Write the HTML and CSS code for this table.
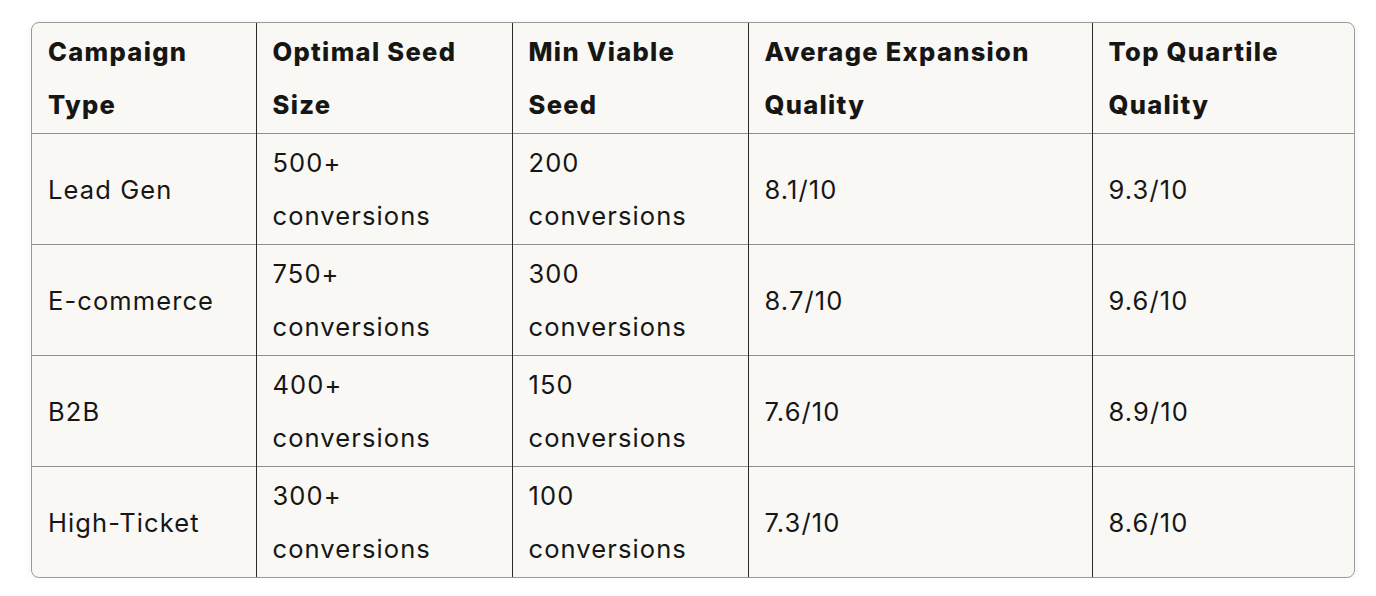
FILE: index.html
```html
<!DOCTYPE html>
<html>
<head>
<meta charset="utf-8">
<link rel="stylesheet" href="styles.css">
</head>
<body>
<div class="wrap">
  <table class="grid">
    <colgroup>
      <col class="c1"><col class="c2"><col class="c3"><col class="c4"><col class="c5">
    </colgroup>
    <thead>
      <tr>
        <th>Campaign Type</th>
        <th>Optimal Seed Size</th>
        <th>Min Viable Seed</th>
        <th>Average Expansion Quality</th>
        <th>Top Quartile Quality</th>
      </tr>
    </thead>
    <tbody>
      <tr><td>Lead Gen</td><td>500+ conversions</td><td>200 conversions</td><td>8.1/10</td><td>9.3/10</td></tr>
      <tr><td>E-commerce</td><td>750+ conversions</td><td>300 conversions</td><td>8.7/10</td><td>9.6/10</td></tr>
      <tr><td>B2B</td><td>400+ conversions</td><td>150 conversions</td><td>7.6/10</td><td>8.9/10</td></tr>
      <tr><td>High-Ticket</td><td>300+ conversions</td><td>100 conversions</td><td>7.3/10</td><td>8.6/10</td></tr>
    </tbody>
  </table>
</div>
</body>
</html>
```
FILE: styles.css
```css
html, body { margin: 0; padding: 0; background: #ffffff; }
body { padding: 22px 21px 0 31px; font-family: "Inter", "Liberation Sans", sans-serif; color: #161615; }
.wrap {
  width: 1324px;
  box-sizing: border-box;
  border: 1px solid #9a9a98;
  border-radius: 8px;
  overflow: hidden;
  background: #f9f8f5;
  box-shadow: 0 2px 10px rgba(0,0,0,0.06);
}
.grid { border-collapse: collapse; width: 100%; table-layout: fixed; font-size: 25.5px; line-height: 53px; letter-spacing: 1.1px; }
.c1 { width: 224px; }
.c2 { width: 256px; }
.c3 { width: 236px; }
.c4 { width: 344px; }
.c5 { width: auto; }
.grid th, .grid td {
  text-align: left;
  vertical-align: middle;
  padding: 2px 16px 2px 16px;
  border-left: 1px solid #2a2a2a;
  border-top: 1px solid #8e8e8c;
}
.grid th { font-weight: 800; letter-spacing: 1.3px; }
.grid td { font-weight: 400; }
.grid tr > :first-child { border-left: none; }
.grid thead tr:first-child th { border-top: none; }
```
